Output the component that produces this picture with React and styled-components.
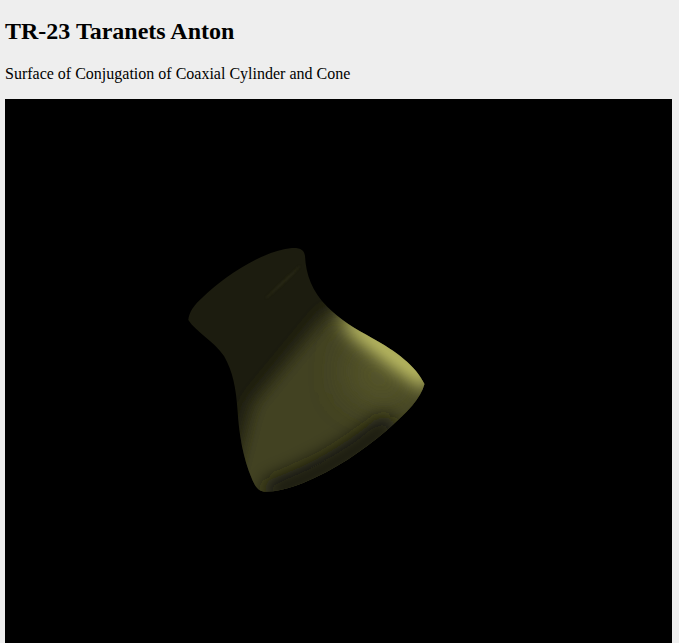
import React from 'react';
import styled, { createGlobalStyle } from 'styled-components';

const GlobalStyle = createGlobalStyle`
  html, body {
    margin: 0;
    height: 643px;
    overflow: hidden;
    background: #eeeeee;
  }
`;

const Page = styled.main`
  padding: 18px 7px 0 5px;
  color: #000;
  font-family: "Liberation Serif", "Times New Roman", serif;
`;

const Title = styled.h1`
  margin: 0 0 20px;
  font-size: 24px;
  line-height: 27px;
  font-weight: bold;
`;

const Subtitle = styled.p`
  margin: 0 0 16px;
  font-size: 16px;
  line-height: 18px;
`;

const Viewport = styled.div`
  height: 544px;
  background: #000;
`;

const Scene = styled.svg`
  display: block;
  width: 100%;
  height: 100%;
`;

// outline of the surface, page coordinates
const OUTLINE = `M188.3 320
  C189 312 194 305 203 297
  C225 276 262 251 292 248
  C300 247.5 304.5 250 305 256
  C306 275 312 291 327 306.5
  C340 320 356 329 372 338
  C396 351 416 366 424.5 384
  C421 398 408 412 386 431
  C362 451 335 470 303 483
  C288 489 274 492 264 491.7
  C258 491 255 486 252 479
  C243 458 239 434 237.5 410
  C236 388 233 372 224 356
  C214 341 196 332 188.3 320 Z`;

const Blur = ({ id, amount }) => (
  <filter id={id} filterUnits="userSpaceOnUse" x="100" y="180" width="420" height="400">
    <feGaussianBlur stdDeviation={amount} />
  </filter>
);

const Surface = () => (
  <g transform="translate(-5 -99)" clipPath="url(#outline)">
    <rect x="180" y="240" width="250" height="260" fill="#1c1c0f" />
    <polygon points="328,312 252,404 225,510 440,510 440,345" fill="#424222" filter="url(#wide)" />
    <polygon points="352,335 420,380 398,412 345,390" fill="#565629" filter="url(#broad)" />
    <polygon points="336,306 378,330 432,370 428,392 394,368 350,334" fill="#cccc6c" filter="url(#wide)" />
    <path d="M276 490 Q336 468 384 428" fill="none" stroke="#171709" strokeWidth="24" strokeLinecap="round" filter="url(#wide)" />
    <path d="M300 266 Q288 280 266 298 Q282 282 300 266 Z" fill="#3a3a20" stroke="#3a3a20" strokeWidth="1" filter="url(#soft)" opacity="0.55" />
  </g>
);

const App = () => (
  <Page>
    <GlobalStyle />
    <Title>TR-23 Taranets Anton</Title>
    <Subtitle>Surface of Conjugation of Coaxial Cylinder and Cone</Subtitle>
    <Viewport>
      <Scene viewBox="0 0 667 544">
        <defs>
          <clipPath id="outline">
            <path d={OUTLINE} />
          </clipPath>
          <Blur id="soft" amount={1} />
          <Blur id="wide" amount={9} />
          <Blur id="broad" amount={18} />
        </defs>
        <Surface />
      </Scene>
    </Viewport>
  </Page>
);

export default App;
